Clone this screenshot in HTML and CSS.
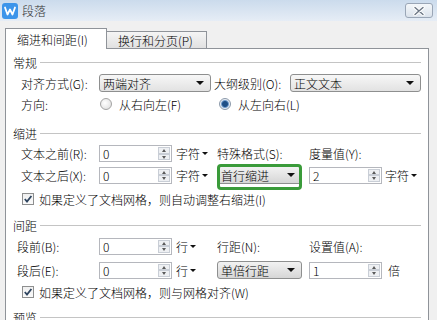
FILE: index.html
```html
<!DOCTYPE html>
<html lang="zh-CN">
<head>
  <meta charset="UTF-8" />
  <title>段落</title>
  <link rel="stylesheet" href="styles.css">
</head>
<body>
  <div class="dialog">
    <div class="titlebar">
      <svg class="app-icon" viewBox="0 0 16 16">
        <rect width="16" height="16" rx="3" fill="#3d95ea"/>
        <path d="M3 4.5 L5.5 11.5 L8 6.5 L10.5 11.5 L13 4.5" fill="none" stroke="#fff" stroke-width="1.8" stroke-linejoin="round" stroke-linecap="round"/>
      </svg>
      <span class="title">段落</span>
      <div class="close">
        <svg width="14" height="10" viewBox="0 0 14 10">
          <path d="M3 1.5 L11 8.5 M11 1.5 L3 8.5" stroke="#fff" stroke-width="3.4" stroke-linecap="round"/>
          <path d="M3 1.5 L11 8.5 M11 1.5 L3 8.5" stroke="#6b7684" stroke-width="1.4" stroke-linecap="round"/>
        </svg>
      </div>
    </div>

    <div class="tabs">
      <div class="tab active">缩进和间距(I)</div>
      <div class="tab">换行和分页(P)</div>
    </div>

    <div class="panel">
      <div class="group-title">常规</div>
      <div class="row h22">
        <span class="label">对齐方式(G):</span>
        <div class="select w-align"><span>两端对齐</span><i class="arrow"></i></div>
        <span class="label outline-label">大纲级别(O):</span>
        <div class="select w-outline"><span>正文文本</span><i class="arrow"></i></div>
      </div>
      <div class="row h20">
        <span class="label">方向:</span>
        <label class="option first"><i class="radio"></i><span>从右向左(F)</span></label>
        <label class="option"><i class="radio checked"></i><span>从左向右(L)</span></label>
      </div>

      <div class="group-title gap9">缩进</div>
      <div class="row h21">
        <span class="label">文本之前(R):</span>
        <div class="spin"><span class="value">0</span><div class="spinner"><b class="up"></b><b class="down"></b></div></div>
        <span class="unit">字符<i class="caret"></i></span>
        <span class="col2">特殊格式(S):</span>
        <span class="col3">度量值(Y):</span>
      </div>
      <div class="row h22">
        <span class="label">文本之后(X):</span>
        <div class="spin"><span class="value">0</span><div class="spinner"><b class="up"></b><b class="down"></b></div></div>
        <span class="unit">字符<i class="caret"></i></span>
        <div class="col2"><div class="select w-special marked"><span>首行缩进</span><i class="arrow"></i></div></div>
        <div class="spin"><span class="value">2</span><div class="spinner"><b class="up"></b><b class="down"></b></div></div>
        <span class="unit tight">字符<i class="caret"></i></span>
      </div>
      <div class="row h26 check-row">
        <i class="checkbox"><svg viewBox="0 0 10 10"><path d="M1.8 5 L4 7.6 L8.4 2" fill="none" stroke="#2f4560" stroke-width="1.8"/></svg></i>
        <span>如果定义了文档网格，则自动调整右缩进(I)</span>
      </div>

      <div class="group-title gap3">间距</div>
      <div class="row h22 spacing">
        <span class="label">段前(B):</span>
        <div class="spin"><span class="value">0</span><div class="spinner"><b class="up"></b><b class="down"></b></div></div>
        <span class="unit">行<i class="caret"></i></span>
        <span class="col2">行距(N):</span>
        <span class="col3">设置值(A):</span>
      </div>
      <div class="row h26 spacing">
        <span class="label">段后(E):</span>
        <div class="spin"><span class="value">0</span><div class="spinner"><b class="up"></b><b class="down"></b></div></div>
        <span class="unit">行<i class="caret"></i></span>
        <div class="col2"><div class="select w-special"><span>单倍行距</span><i class="arrow"></i></div></div>
        <div class="spin"><span class="value">1</span><div class="spinner"><b class="up"></b><b class="down"></b></div></div>
        <span class="unit wide">倍</span>
      </div>
      <div class="row h18 check-row">
        <i class="checkbox"><svg viewBox="0 0 10 10"><path d="M1.8 5 L4 7.6 L8.4 2" fill="none" stroke="#2f4560" stroke-width="1.8"/></svg></i>
        <span>如果定义了文档网格，则与网格对齐(W)</span>
      </div>

      <div class="group-title gap6">预览</div>
    </div>
  </div>
</body>
</html>
```

FILE: styles.css
```css
* {
  box-sizing: border-box;
}

body {
  margin: 0;
  width: 437px;
  height: 320px;
  overflow: hidden;
  background: #f0f0f0;
  font-family: "Noto Sans CJK SC", "Liberation Sans", sans-serif;
  font-size: 12px;
  font-weight: 300;
  color: #000;
}

.titlebar {
  height: 21px;
  display: flex;
  align-items: center;
  background: linear-gradient(#cbdbec, #e6edf6);
}

.app-icon {
  width: 16px;
  height: 16px;
  margin-left: 2px;
}

.title {
  margin-left: 4px;
  color: #333;
}

.close {
  margin-left: auto;
  margin-right: 4px;
  width: 28px;
  height: 15px;
  border: 1px solid #9aa6b6;
  border-radius: 3px;
  background: linear-gradient(#f4f7fa, #dbe3ec);
  display: flex;
  align-items: center;
  justify-content: center;
}

.tabs {
  height: 27px;
  display: flex;
  align-items: flex-end;
  padding-left: 5px;
}

.tab {
  width: 100px;
  height: 17px;
  padding-left: 11px;
  display: flex;
  align-items: center;
  border: 1px solid #8f9399;
  border-left: none;
  border-bottom: none;
  background: linear-gradient(#f5f5f5, #e1e1e1);
}

.tab.active {
  width: 102px;
  height: 21px;
  padding-left: 11px;
  margin-bottom: -1px;
  border-left: 1px solid #8f9399;
  background: #fff;
  position: relative;
  z-index: 1;
}

.panel {
  margin-left: 5px;
  width: 424px;
  height: 300px;
  padding-top: 3px;
  border: 1px solid #8f9399;
  background: #fff;
}

.group-title {
  height: 20px;
  display: flex;
  align-items: center;
  margin: 0 7px 0 7px;
}

.group-title::after {
  content: "";
  flex: 1;
  margin-left: 3px;
  border-top: 1px solid #c4c4c4;
}

.gap9 { margin-top: 9px; }
.gap3 { margin-top: 3px; }
.gap6 { margin-top: 6px; }

.row {
  display: flex;
  align-items: center;
  padding-left: 15px;
}

.h18 { height: 18px; }
.h20 { height: 20px; }
.h21 { height: 21px; }
.h22 { height: 22px; }
.h26 { height: 26px; }

.label {
  width: 78px;
  flex-shrink: 0;
}

.spacing .label {
  margin-left: -4px;
  width: 82px;
}

.outline-label {
  width: 76px;
  margin-left: 3px;
}

.select {
  height: 18px;
  display: flex;
  align-items: center;
  justify-content: space-between;
  padding: 0 6px 0 3px;
  border: 1px solid #8e8f8f;
  border-radius: 3px;
  background: linear-gradient(#f7f7f7, #e2e2e2);
}

.w-align { width: 112px; }
.w-outline { width: 131px; }
.w-special {
  width: 85px;
  background: linear-gradient(#f2f2f2, #d6d6d6);
}

.arrow {
  width: 0;
  height: 0;
  border-left: 4px solid transparent;
  border-right: 4px solid transparent;
  border-top: 4px solid #111;
}

.marked {
  position: relative;
}

.marked::after {
  content: "";
  position: absolute;
  left: -1px;
  right: -1px;
  top: -3px;
  bottom: -7px;
  border: 3px solid #3a9b3a;
  border-radius: 4px;
}

.option {
  display: flex;
  align-items: center;
  width: 120px;
}

.option.first {
  padding-left: 1px;
}

.option span {
  margin-left: 7px;
}

.radio {
  width: 12px;
  height: 12px;
  border-radius: 50%;
  border: 1px solid #a3a3a3;
  background: radial-gradient(circle at 40% 40%, #fff, #dadada);
}

.radio.checked {
  border-color: #8b99aa;
  background: radial-gradient(circle, #1f4f86 0 2.5px, #6f9acb 3.5px, #e8eef5 4.5px);
}

.spin {
  width: 73px;
  height: 17px;
  display: flex;
  border: 1px solid #b5b7bd;
  background: #fff;
  flex-shrink: 0;
}

.value {
  flex: 1;
  padding-left: 3px;
  line-height: 15px;
}

.spinner {
  width: 14px;
  display: flex;
  flex-direction: column;
  padding: 1px;
}

.spinner b {
  flex: 1;
  border: 1px solid #c9ced6;
  background: #eef0f3;
  position: relative;
}

.spinner b::after {
  content: "";
  position: absolute;
  left: 3px;
  width: 0;
  height: 0;
  border-left: 2.5px solid transparent;
  border-right: 2.5px solid transparent;
}

.spinner .up::after {
  top: 1px;
  border-bottom: 3px solid #5a5a5a;
}

.spinner .down::after {
  top: 1px;
  border-top: 3px solid #5a5a5a;
}

.unit {
  width: 45px;
  padding-left: 4px;
  display: flex;
  align-items: center;
  flex-shrink: 0;
}

.unit.tight {
  padding-left: 3px;
}

.unit.wide {
  padding-left: 6px;
}

.caret {
  margin-left: 2px;
  width: 0;
  height: 0;
  border-left: 3px solid transparent;
  border-right: 3px solid transparent;
  border-top: 3px solid #111;
}

.col2 {
  width: 92px;
  flex-shrink: 0;
}

.col3 {
  width: 90px;
}

.check-row {
  padding-left: 16px;
}

.checkbox {
  width: 12px;
  height: 12px;
  border: 1px solid #8e8f8f;
  background: linear-gradient(#f0f0f0, #fafafa);
  display: flex;
  margin-right: 5px;
}

.checkbox svg {
  width: 10px;
  height: 10px;
}
```
